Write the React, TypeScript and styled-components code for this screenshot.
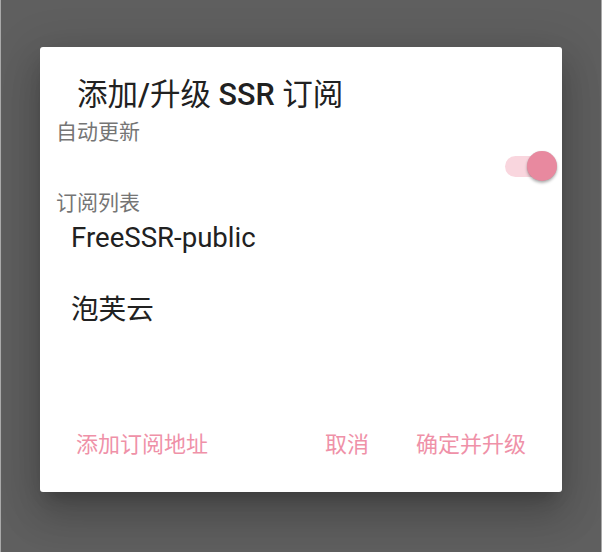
import { useState } from "react";
import styled, { createGlobalStyle } from "styled-components";

const GlobalStyle = createGlobalStyle`
  html, body {
    margin: 0;
    padding: 0;
    background: #5f5f5f;
  }
  body {
    font-family: Roboto, "Noto Sans CJK SC", sans-serif;
  }
`;

const subscriptions = ["FreeSSR-public", "泡芙云"];

export default function App() {
  const [autoUpdate, setAutoUpdate] = useState(true);

  return (
    <>
      <GlobalStyle />
      <Backdrop>
        <Dialog>
          <Title>
            添加<Latin>/</Latin>升级 <Latin>SSR</Latin> 订阅
          </Title>
          <Caption>自动更新</Caption>
          <SwitchRow>
            <Switch onClick={() => setAutoUpdate(!autoUpdate)}>
              <Track $on={autoUpdate} />
              <Thumb $on={autoUpdate} />
            </Switch>
          </SwitchRow>
          <Caption $gap={3}>订阅列表</Caption>
          <List>
            {subscriptions.map((name) => (
              <Item key={name}>{name}</Item>
            ))}
          </List>
          <Actions>
            <TextButton>添加订阅地址</TextButton>
            <Spacer />
            <TextButton>取消</TextButton>
            <TextButton>确定并升级</TextButton>
          </Actions>
        </Dialog>
      </Backdrop>
    </>
  );
}

const Backdrop = styled.div`
  width: 602px;
  height: 552px;
  box-sizing: border-box;
  border-left: 1px solid #a9a9a9;
  border-right: 1px solid #a9a9a9;
  padding: 47px 0 0 39px;
  overflow: hidden;
`;

const Dialog = styled.div`
  width: 522px;
  height: 445px;
  background: #ffffff;
  border-radius: 3px;
  display: flex;
  flex-direction: column;
  box-shadow: 0 11px 15px -7px rgba(0, 0, 0, 0.2),
    0 24px 38px 3px rgba(0, 0, 0, 0.14), 0 9px 46px 8px rgba(0, 0, 0, 0.12);
`;

const Title = styled.div`
  padding: 30px 0 0 37px;
  font-size: 30.5px;
  line-height: 36px;
  font-weight: 400;
  color: #212121;
`;

const Latin = styled.span`
  font-weight: 500;
`;

const Caption = styled.div<{ $gap?: number }>`
  margin-top: ${(p) => p.$gap ?? 7}px;
  padding-left: 16px;
  font-size: 21px;
  line-height: 24px;
  color: #757575;
`;

const SwitchRow = styled.div`
  height: 44px;
  display: flex;
  align-items: center;
  justify-content: flex-end;
  padding-right: 5px;
`;

const Switch = styled.div`
  position: relative;
  width: 52px;
  height: 30px;
  cursor: pointer;
`;

const Track = styled.div<{ $on: boolean }>`
  position: absolute;
  left: 0;
  top: 5px;
  width: 44px;
  height: 21px;
  border-radius: 11px;
  background: ${(p) => (p.$on ? "#f9d6de" : "#bdbdbd")};
`;

const Thumb = styled.div<{ $on: boolean }>`
  position: absolute;
  top: 0;
  left: ${(p) => (p.$on ? "22px" : "0")};
  width: 30px;
  height: 30px;
  border-radius: 50%;
  background: ${(p) => (p.$on ? "#e8899f" : "#f1f1f1")};
  box-shadow: 0 2px 3px rgba(0, 0, 0, 0.3), 0 0 1px rgba(0, 0, 0, 0.15);
`;

const List = styled.div`
  margin-top: 5px;
  display: flex;
  flex-direction: column;
  gap: 36px;
`;

const Item = styled.div`
  padding-left: 31px;
  font-size: 27.6px;
  line-height: 36px;
  color: #212121;
`;

const Actions = styled.div`
  margin-top: auto;
  margin-bottom: 23px;
  height: 48px;
  display: flex;
  align-items: center;
  padding: 0 24px;
`;

const Spacer = styled.div`
  flex: 1;
`;

const TextButton = styled.div`
  padding: 0 12px;
  margin-left: 23px;
  font-size: 22px;
  line-height: 48px;
  color: #ef91a8;
  cursor: pointer;

  &:first-child {
    margin-left: 0;
  }
`;
